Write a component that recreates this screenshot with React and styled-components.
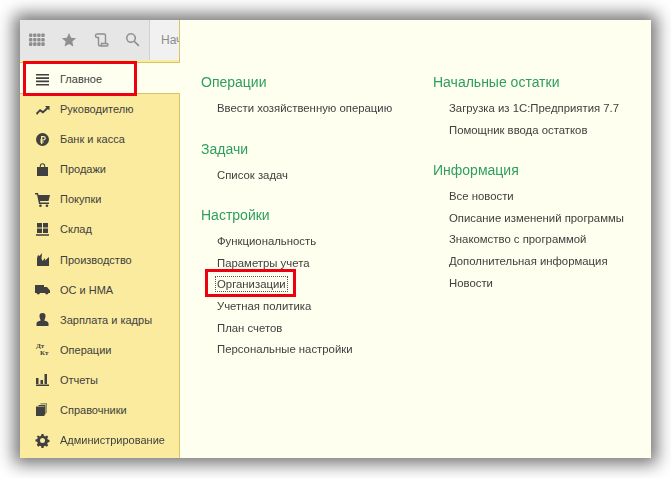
import React from 'react';
import styled, { createGlobalStyle } from 'styled-components';

const GlobalStyle = createGlobalStyle`
  html, body { margin: 0; padding: 0; background: #fff; }
  body { font-family: "Liberation Sans", Arial, sans-serif; }
`;

const Page = styled.div`
  width: 671px;
  height: 478px;
  padding: 20px;
  box-sizing: border-box;
  overflow: hidden;
`;

const Frame = styled.div`
  position: relative;
  width: 631px;
  height: 438px;
  display: flex;
  background: #fffff0;
  box-shadow: 0 0 16px 6px rgba(0, 0, 0, 0.55);
  filter: blur(0.3px);
`;

const Side = styled.div`
  width: 160px;
  flex-shrink: 0;
  display: flex;
  flex-direction: column;
  background: #fbeb9e;
  border-right: 1px solid #d8c368;
  box-sizing: border-box;
`;

const Toolbar = styled.div`
  height: 40px;
  flex-shrink: 0;
  display: flex;
  align-items: center;
  background: #e6e6e6;
  color: #8f8f8f;
  box-sizing: border-box;
  padding-left: 9px;
  gap: 16px;
  overflow: hidden;
`;

const ToolIcon = styled.svg`
  width: 16px;
  height: 16px;
  flex-shrink: 0;
  fill: currentColor;
`;

const SearchTab = styled.div`
  height: 100%;
  flex: 1;
  box-sizing: border-box;
  margin-left: -8px;
  background: #f1f1f1;
  border-left: 1px solid #cfcfcf;
  padding-left: 11px;
  display: flex;
  align-items: center;
  font-size: 12px;
  color: #8c8c8c;
  white-space: nowrap;
  overflow: hidden;
`;

const MenuRow = styled.div`
  height: 30.1px;
  flex-shrink: 0;
  display: flex;
  align-items: center;
  padding-left: 16px;
  gap: 11px;
  color: #404040;
  font-size: 11px;
  ${p => p.$active && `
    margin: 2px -1px 0 0;
    padding-top: 2px;
    height: 28px;
    background: #fffff0;
    border-top: 1px solid #d8c368;
    border-bottom: 1px solid #d8c368;
    box-sizing: content-box;
  `}
`;

const MenuIcon = styled.svg`
  width: 13px;
  height: 13px;
  flex-shrink: 0;
  fill: #404040;
`;

const OpsGlyph = styled.span`
  width: 13px;
  flex-shrink: 0;
  font-family: "Liberation Serif", serif;
  font-weight: bold;
  font-size: 7px;
  line-height: 7px;
  color: #404040;
  & > span { display: block; }
  & > span:last-child { padding-left: 4px; }
`;

const Content = styled.div`
  flex: 1;
  display: flex;
  padding: 53px 0 0 21px;
  gap: 41px;
`;

const Column = styled.div`
  width: 191px;
  &:last-child { width: 200px; }
`;

const Group = styled.div`
  margin-bottom: 20px;
`;

const Heading = styled.div`
  font-size: 14px;
  line-height: 18px;
  color: #2e9e5f;
  margin-bottom: 7px;
`;

const LinkItem = styled.div`
  font-size: 11.35px;
  line-height: 21.6px;
  color: #404040;
  padding-left: 16px;
  white-space: nowrap;
`;

const Focused = styled.span`
  outline: 1px dotted #555;
  padding: 1px;
  margin-left: -1px;
`;

const RedMark = styled.div`
  position: absolute;
  box-sizing: border-box;
  border: 3px solid #ee0010;
  left: ${p => p.$x}px;
  top: ${p => p.$y}px;
  width: ${p => p.$w}px;
  height: ${p => p.$h}px;
`;

const icons = {
  main: <path d="M0 1h13v1.600H0zM0 4.300h13v1.600H0zM0 7.600h13v1.600H0zM0 10.900h13v1.600H0z" />,
  chart: <path d="M0 10l4-4 3 2 3.500-3.500L9 3h4.500v4.500L12 6 7 10.500 4 8.500 1 12z" />,
  bank: <path fillRule="evenodd" d="M6.500 0a6.500 6.500 0 1 0 0 13 6.500 6.500 0 0 0 0-13zM5 3h2.500a2.300 2.300 0 0 1 0 4.600H6.300v.9h1.500v1H6.300V11H5V9.500H4v-1h1v-.9H4v-1h1zm1.300 1.200v2.200h1.200a1.100 1.100 0 0 0 0-2.200z" />,
  bag: <path fillRule="evenodd" d="M1 4h2.800V3a2.700 2.700 0 0 1 5.400 0v1H12v9H1zm3.800 0h3.400V3a1.700 1.700 0 0 0-3.400 0z" />,
  cart: <path d="M-1 0h3l.5 2H14l-1.500 6H4l.3 1.500H13V11H3L1 1.500H-1zM4.500 11.500a1.300 1.300 0 1 1-.1 2.600 1.300 1.300 0 0 1 .1-2.600zM11 11.500a1.300 1.300 0 1 1-.1 2.600 1.300 1.300 0 0 1 .1-2.600z" />,
  stock: <path d="M1 0h5v4.500H1zM7 0h5v4.500H7zM1 5.500h5V10H1zM7 5.500h5V10H7zM0 11.200h13v1.600H0z" />,
  factory: <path d="M1 13V5l1-3 1.500 1L6 0l-.5 5.500L6.500 8 9 5v2.500L13 4v9z" />,
  truck: <path d="M-1 2h9v2h3l3 3.500V10h-1.500a1.800 1.800 0 0 1-3.500 0H4a1.800 1.800 0 0 1-3.500 0H-1z" />,
  user: <path d="M6.500 0a3 3 0 0 1 3 3.200C9.500 5 8.500 6.500 8.300 7.500c2 .5 4.200 1 4.200 3V13H.5v-2.500c0-2 2.200-2.500 4.200-3-.2-1-1.200-2.500-1.200-4.300A3 3 0 0 1 6.500 0z" />,
  bars: <path d="M0 5h2.500v6H0zM4.500 7H7v4H4.500zM8.500 1H11v10H8.500zM0 11.500h13V13H0z" />,
  books: <path fillRule="evenodd" d="M0 3.500h8.500V13H0zM9.300 2H2.500v1h6v8.500h1V2zM11 .5H4.500v.8H10.500V10h.5z" />,
  gear: <path fillRule="evenodd" d="M5.500 0h2l.4 1.800 1.300.6L10.800 1.400 12.200 2.800l-1 1.600.6 1.200 1.700.4v2l-1.700.4-.6 1.300 1 1.600-1.400 1.400-1.600-1-1.300.5-.4 1.800h-2l-.4-1.800-1.300-.5-1.600 1L.8 10.700l1-1.600-.6-1.300L-.5 7.400v-2l1.700-.4.600-1.200-1-1.600L2.200 1.400l1.600 1 1.300-.6zM6.500 4a2.500 2.500 0 1 0 0 5 2.500 2.500 0 0 0 0-5z" />
};

const menu = [
  ['main', 'Главное'],
  ['chart', 'Руководителю'],
  ['bank', 'Банк и касса'],
  ['bag', 'Продажи'],
  ['cart', 'Покупки'],
  ['stock', 'Склад'],
  ['factory', 'Производство'],
  ['truck', 'ОС и НМА'],
  ['user', 'Зарплата и кадры'],
  ['ops', 'Операции'],
  ['bars', 'Отчеты'],
  ['books', 'Справочники'],
  ['gear', 'Администрирование']
];

const left = [
  ['Операции', ['Ввести хозяйственную операцию']],
  ['Задачи', ['Список задач']],
  ['Настройки', ['Функциональность', 'Параметры учета', 'Организации', 'Учетная политика', 'План счетов', 'Персональные настройки']]
];

const right = [
  ['Начальные остатки', ['Загрузка из 1С:Предприятия 7.7', 'Помощник ввода остатков']],
  ['Информация', ['Все новости', 'Описание изменений программы', 'Знакомство с программой', 'Дополнительная информация', 'Новости']]
];

// dots of the "all functions" button, 4 by 3
const dots = [];
for (let r = 0; r < 3; r++) {
  for (let c = 0; c < 4; c++) {
    dots.push(<rect key={`${r}-${c}`} x={c * 4.1} y={1.5 + r * 4.4} width="3.4" height="3.6" rx="1" />);
  }
}

function Section({ title, items }) {
  return (
    <Group>
      <Heading>{title}</Heading>
      {items.map(item => (
        <LinkItem key={item}>
          {item === 'Организации' ? <Focused>{item}</Focused> : item}
        </LinkItem>
      ))}
    </Group>
  );
}

export default function App() {
  return (
    <Page>
      <GlobalStyle />
      <Frame>
        <Side>
          <Toolbar>
            <ToolIcon viewBox="0 0 16 16">{dots}</ToolIcon>
            <ToolIcon viewBox="0 0 16 16">
              <path d="M8 1l2.100 4.700 5 .5-3.800 3.300 1.100 5L8 12l-4.400 2.500 1.100-5L.9 6.200l5-.5z" />
            </ToolIcon>
            <ToolIcon viewBox="0 0 16 16">
              <path fill="none" stroke="currentColor" strokeWidth="1.400" d="M4.500 2h6.500c1 0 1.500.5 1.500 1.500v8M4.500 2C3 2 2.500 3 2.500 4s.5 1.500 1.800 1.500H5.500V12c0 1.200.8 2 2 2h6c1 0 1.500-.8 1.500-1.500s-.5-1-1.300-1H8.500v1c0 .8-.5 1.500-1 1.500" />
            </ToolIcon>
            <ToolIcon viewBox="0 0 16 16">
              <path fillRule="evenodd" d="M6 1a5 5 0 0 1 4.100 7.900l4.400 4.300-1.300 1.300-4.300-4.400A5 5 0 1 1 6 1zm0 1.500a3.500 3.500 0 1 0 0 7 3.500 3.500 0 0 0 0-7z" />
            </ToolIcon>
            <SearchTab>Нач</SearchTab>
          </Toolbar>
          {menu.map(([icon, label], i) => (
            <MenuRow key={label} $active={i === 0}>
              {icon === 'ops' ? (
                <OpsGlyph><span>Дт</span><span>Кт</span></OpsGlyph>
              ) : (
                <MenuIcon viewBox="0 0 13 13" overflow="visible">{icons[icon]}</MenuIcon>
              )}
              {label}
            </MenuRow>
          ))}
        </Side>
        <Content>
          <Column>
            {left.map(([t, items]) => <Section key={t} title={t} items={items} />)}
          </Column>
          <Column>
            {right.map(([t, items]) => <Section key={t} title={t} items={items} />)}
          </Column>
        </Content>
        <RedMark $x={3} $y={41} $w={114} $h={35} />
        <RedMark $x={185} $y={249} $w={91} $h={28} />
      </Frame>
    </Page>
  );
}
